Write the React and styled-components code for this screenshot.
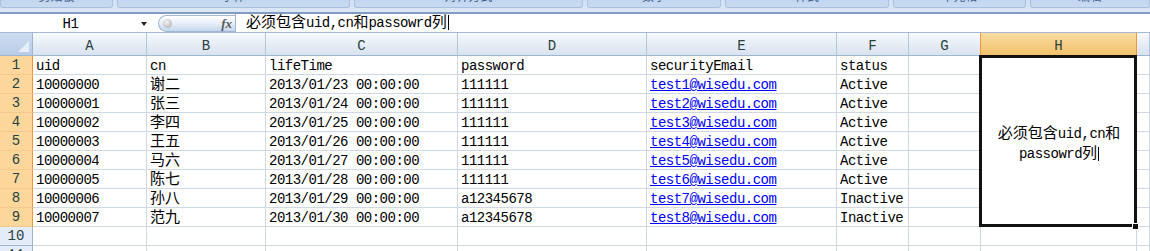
import React from "react";
import styled, { createGlobalStyle } from "styled-components";

const GlobalStyle = createGlobalStyle`
  html, body { margin: 0; padding: 0; background: #fff; overflow: hidden; }
  * { box-sizing: border-box; }
`;

const MONO = `"Liberation Mono", "Noto Sans CJK SC", monospace`;

const groups = ["剪贴板", "字体", "对齐方式", "数字", "样式", "单元格", "编辑"];
const groupWidths = [113, 233, 229, 134, 164, 133, 119];

const columns = [
  { key: "A", width: 114 },
  { key: "B", width: 119 },
  { key: "C", width: 192 },
  { key: "D", width: 189 },
  { key: "E", width: 190 },
  { key: "F", width: 72 },
  { key: "G", width: 72 },
  { key: "H", width: 156, selected: true },
];

const rows = [
  ["10000000", "谢二", "2013/01/23 00:00:00", "111111", "test1@wisedu.com", "Active"],
  ["10000001", "张三", "2013/01/24 00:00:00", "111111", "test2@wisedu.com", "Active"],
  ["10000002", "李四", "2013/01/25 00:00:00", "111111", "test3@wisedu.com", "Active"],
  ["10000003", "王五", "2013/01/26 00:00:00", "111111", "test4@wisedu.com", "Active"],
  ["10000004", "马六", "2013/01/27 00:00:00", "111111", "test5@wisedu.com", "Active"],
  ["10000005", "陈七", "2013/01/28 00:00:00", "111111", "test6@wisedu.com", "Active"],
  ["10000006", "孙八", "2013/01/29 00:00:00", "a12345678", "test7@wisedu.com", "Inactive"],
  ["10000007", "范九", "2013/01/30 00:00:00", "a12345678", "test8@wisedu.com", "Inactive"],
];

const Window = styled.div`
  width: 1150px;
  height: 251px;
  overflow: hidden;
  font-family: ${MONO};
  color: #000;
`;

const Ribbon = styled.div`
  height: 12px;
  display: flex;
  gap: 4px;
  background: linear-gradient(#cfdff2, #dde8f6);
`;

const RibbonGroup = styled.div`
  flex: ${(p) => (p.$last ? 1 : "none")};
  width: ${(p) => p.$width}px;
  height: 8px;
  overflow: hidden;
  display: flex;
  justify-content: center;
  background: linear-gradient(#c2d6ef, #c8dbf1);
  border: 1px solid #a9c1e0;
  border-top: none;
  border-radius: 0 0 3px 3px;
`;

const RibbonLabel = styled.span`
  margin-top: -11px;
  font-family: "Noto Sans CJK SC", sans-serif;
  font-size: 12px;
  line-height: 14px;
  color: #3b5f92;
`;

const FormulaBar = styled.div`
  height: 21px;
  display: flex;
  border-top: 2px solid #7f9cc2;
  border-bottom: 1px solid #a4b9d5;
  background: #fff;
`;

const NameBox = styled.div`
  width: 158px;
  display: flex;
  align-items: center;
  font-size: 14px;
  letter-spacing: -0.5px;
  padding-top: 1px;
`;

const NameText = styled.span`
  width: 141px;
  text-align: center;
`;

const DropArrow = styled.span`
  width: 0;
  height: 0;
  margin-top: 1px;
  border-left: 3.5px solid transparent;
  border-right: 3.5px solid transparent;
  border-top: 4px solid #222;
`;

const FxButton = styled.div`
  width: 77px;
  height: 17px;
  margin-top: 1px;
  display: flex;
  align-items: center;
  justify-content: space-between;
  padding: 0 3px 0 4px;
  border: 1px solid #a2b7d3;
  border-right: none;
  border-radius: 9px 0 0 9px;
  background: linear-gradient(#ffffff, #e6eef8 50%, #c7d7ec);
`;

const Knob = styled.span`
  width: 9px;
  height: 9px;
  border-radius: 50%;
  background: radial-gradient(circle at 40% 35%, #f4f4f4, #a6a6a6);
`;

const FxLabel = styled.span`
  font-family: "Liberation Serif", serif;
  font-style: italic;
  font-weight: bold;
  font-size: 13px;
  color: #5a5a5a;
`;

const FormulaInput = styled.div`
  flex: 1;
  display: flex;
  align-items: center;
  padding-left: 10px;
  border-left: 1px solid #a2b7d3;
  font-size: 14px;
  line-height: 17px;
  letter-spacing: -0.5px;
`;

const Han = styled.span`
  font-family: "Noto Sans CJK SC", sans-serif;
  font-size: 15px;
  line-height: 11px;
  letter-spacing: 0;
`;

const Caret = styled.span`
  display: inline-block;
  width: 1px;
  height: ${(p) => p.$h || 14}px;
  margin-left: 1px;
  vertical-align: -3px;
  background: #000;
`;

const Sheet = styled.div`
  display: grid;
  grid-template-columns: 33px ${columns.map((c) => c.width + "px").join(" ")} 1fr;
  grid-template-rows: 23px repeat(10, 19px) 19px;
`;

const Corner = styled.div`
  position: relative;
  background: linear-gradient(#cddcf0, #b9cde9);
  border-right: 1px solid #9eb6ce;
  border-bottom: 1px solid #9eb6ce;
`;

const CornerMark = styled.svg`
  position: absolute;
  right: 3px;
  bottom: 3px;
`;

const ColHead = styled.div`
  display: flex;
  align-items: flex-end;
  justify-content: center;
  padding-bottom: 1px;
  font-size: 14px;
  color: #27413e;
  background: ${(p) =>
    p.$selected
      ? "linear-gradient(#f9dca3, #f1c26a)"
      : "linear-gradient(#f8fafd, #e4ebf5 60%, #d9e2ef)"};
  border-right: 1px solid ${(p) => (p.$selected ? "#f29536" : "#b1c5dd")};
  border-left: ${(p) => (p.$selected ? "1px solid #f29536" : "none")};
  border-bottom: 1px solid ${(p) => (p.$selected ? "#f29536" : "#9eb6ce")};
  margin-left: ${(p) => (p.$selected ? "-1px" : "0")};
`;

const RowHead = styled.div`
  display: flex;
  align-items: flex-end;
  justify-content: center;
  padding-bottom: 1px;
  font-size: 14px;
  line-height: 16px;
  color: #27413e;
  background: ${(p) => (p.$selected ? "#fcd69b" : "#e4ecf7")};
  border-right: 1px solid ${(p) => (p.$selected ? "#f29536" : "#9eb6ce")};
  border-bottom: 1px solid ${(p) => (p.$selected ? "#f6c98a" : "#9eb6ce")};
`;

const Cell = styled.div`
  padding: 2px 0 0 3px;
  font-size: 14px;
  line-height: 17px;
  letter-spacing: -0.5px;
  white-space: nowrap;
  border-right: 1px solid #d0d7e5;
  border-bottom: 1px solid #d0d7e5;
`;

const Link = styled.span`
  color: #0000ff;
  text-decoration: underline;
`;

const MergedCell = styled.div`
  position: relative;
  grid-column: 9;
  grid-row: 2 / 11;
  display: flex;
  align-items: center;
  justify-content: center;
  padding-top: 4px;
  text-align: center;
  font-size: 14px;
  line-height: 20px;
  letter-spacing: -0.5px;
  background: #fff;

  &::after {
    content: "";
    position: absolute;
    top: -1px;
    left: -2px;
    right: 0;
    bottom: 0;
    border: 3px solid #111;
  }
`;

const FillHandle = styled.span`
  position: absolute;
  right: -2px;
  bottom: -3px;
  width: 7px;
  height: 7px;
  background: #111;
  border: 1px solid #fff;
  z-index: 1;
`;

function renderValue(col, value) {
  if (col === 1) return <Han>{value}</Han>;
  if (col === 4) return <Link>{value}</Link>;
  return value;
}

export default function App() {
  return (
    <Window>
      <GlobalStyle />
      <Ribbon>
        {groups.map((g, i) => (
          <RibbonGroup key={g} $width={groupWidths[i]} $last={i === groups.length - 1}>
            <RibbonLabel>{g}</RibbonLabel>
          </RibbonGroup>
        ))}
      </Ribbon>
      <FormulaBar>
        <NameBox>
          <NameText>H1</NameText>
          <DropArrow />
        </NameBox>
        <FxButton>
          <Knob />
          <FxLabel>fx</FxLabel>
        </FxButton>
        <FormulaInput>
          <span>
            <Han>必须包含</Han>uid,cn<Han>和</Han>passowrd<Han>列</Han>
            <Caret $h={15} />
          </span>
        </FormulaInput>
      </FormulaBar>
      <Sheet>
        <Corner>
          <CornerMark width="11" height="11" viewBox="0 0 11 11">
            <path d="M11 0 L11 11 L0 11 Z" fill="#e9eff8" />
          </CornerMark>
        </Corner>
        {columns.map((c) => (
          <ColHead key={c.key} $selected={c.selected}>
            {c.key}
          </ColHead>
        ))}
        <ColHead />

        {[["uid", "cn", "lifeTime", "password", "securityEmail", "status"], ...rows].map(
          (row, r) => (
            <React.Fragment key={r}>
              <RowHead $selected>{r + 1}</RowHead>
              {row.map((v, c) => (
                <Cell key={c}>{r === 0 ? v : renderValue(c, v)}</Cell>
              ))}
              <Cell />
              {r === 0 && (
                <MergedCell>
                  <div>
                    <Han>必须包含</Han>uid,cn<Han>和</Han>
                    <br />
                    passowrd<Han>列</Han>
                    <Caret $h={14} />
                  </div>
                  <FillHandle />
                </MergedCell>
              )}
              <Cell />
            </React.Fragment>
          )
        )}

        {[10, 11].map((n) => (
          <React.Fragment key={n}>
            <RowHead>{n}</RowHead>
            {columns.map((c) => (
              <Cell key={c.key} />
            ))}
            <Cell />
          </React.Fragment>
        ))}
      </Sheet>
    </Window>
  );
}
